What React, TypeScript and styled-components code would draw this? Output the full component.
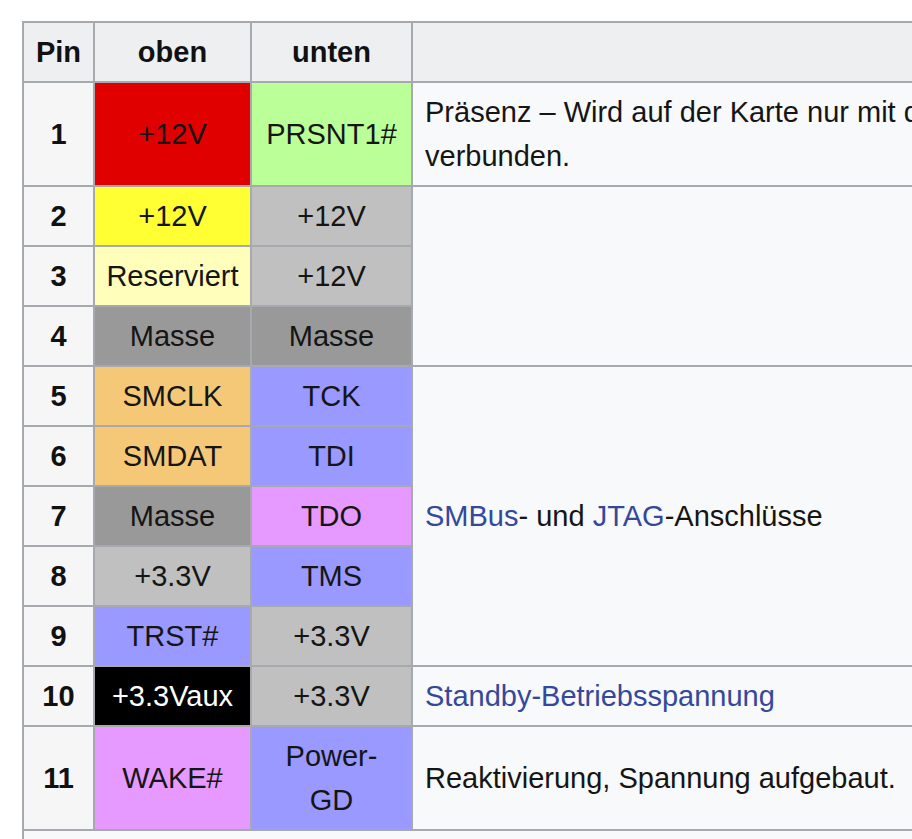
import React from "react";
import styled, { createGlobalStyle } from "styled-components";

const Global = createGlobalStyle`
  html, body {
    margin: 0;
    padding: 0;
    background: #ffffff;
    overflow: hidden;
  }
  body {
    font-family: "Liberation Sans", Arial, Helvetica, sans-serif;
    color: #202122;
  }
`;

const Page = styled.div`
  padding: 21px 0 0 22px;
  width: 1200px;
`;

const Table = styled.table`
  border-collapse: collapse;
  table-layout: fixed;
  width: 999px;
  font-size: 29px;
  line-height: 44px;
  background: #f8f9fa;
  border: 2px solid #a6a9ad;
`;

const Col = styled.col<{ $w: number }>`
  width: ${(p) => p.$w}px;
`;

const HeaderCell = styled.th`
  background: #eeeff1;
  border: 2px solid #a6a9ad;
  padding: 7px 10px;
  font-weight: bold;
  text-align: center;
  color: #111;
`;

const PinCell = styled.th`
  background: #f6f6f7;
  border: 2px solid #a6a9ad;
  padding: 7px 6px;
  font-weight: bold;
  text-align: center;
  color: #111;
`;

const SignalCell = styled.td<{ $bg: string; $fg?: string }>`
  background: ${(p) => p.$bg};
  color: ${(p) => p.$fg ?? "#151515"};
  border: 2px solid #a6a9ad;
  padding: 7px 6px;
  text-align: center;
  white-space: nowrap;
`;

const DescCell = styled.td`
  background: #f8f9fa;
  border: 2px solid #a6a9ad;
  padding: 7px 12px;
  text-align: left;
  vertical-align: middle;
  color: #151515;
  white-space: nowrap;
`;

const FooterCell = styled.td`
  background: #f8f9fa;
  border: 2px solid #a6a9ad;
  padding: 7px 12px;
  height: 44px;
`;

const WikiLink = styled.a`
  color: #34489c;
  text-decoration: none;
`;

type Row = {
  pin: number;
  top: string;
  topBg: string;
  topFg?: string;
  bottom: React.ReactNode;
  bottomBg: string;
  desc?: { span: number; content: React.ReactNode };
};

const RED = "#e00000";
const GREEN = "#bbff99";
const YELLOW = "#ffff33";
const LYELLOW = "#ffffbb";
const SILVER = "#c0c0c0";
const GRAY = "#999999";
const ORANGE = "#f5c878";
const BLUE = "#9999ff";
const PINK = "#e699ff";

const rows: Row[] = [
  {
    pin: 1,
    top: "+12V",
    topBg: RED,
    bottom: "PRSNT1#",
    bottomBg: GREEN,
    desc: {
      span: 1,
      content: (
        <>
          Präsenz – Wird auf der Karte nur mit dem jeweils letzten PRSNT2#
          <br />
          verbunden.
        </>
      ),
    },
  },
  { pin: 2, top: "+12V", topBg: YELLOW, bottom: "+12V", bottomBg: SILVER, desc: { span: 3, content: "" } },
  { pin: 3, top: "Reserviert", topBg: LYELLOW, bottom: "+12V", bottomBg: SILVER },
  { pin: 4, top: "Masse", topBg: GRAY, bottom: "Masse", bottomBg: GRAY },
  {
    pin: 5,
    top: "SMCLK",
    topBg: ORANGE,
    bottom: "TCK",
    bottomBg: BLUE,
    desc: {
      span: 5,
      content: (
        <>
          <WikiLink href="#">SMBus</WikiLink>- und <WikiLink href="#">JTAG</WikiLink>-Anschlüsse
        </>
      ),
    },
  },
  { pin: 6, top: "SMDAT", topBg: ORANGE, bottom: "TDI", bottomBg: BLUE },
  { pin: 7, top: "Masse", topBg: GRAY, bottom: "TDO", bottomBg: PINK },
  { pin: 8, top: "+3.3V", topBg: SILVER, bottom: "TMS", bottomBg: BLUE },
  { pin: 9, top: "TRST#", topBg: BLUE, bottom: "+3.3V", bottomBg: SILVER },
  {
    pin: 10,
    top: "+3.3Vaux",
    topBg: "#000000",
    topFg: "#ffffff",
    bottom: "+3.3V",
    bottomBg: SILVER,
    desc: { span: 1, content: <WikiLink href="#">Standby-Betriebsspannung</WikiLink> },
  },
  {
    pin: 11,
    top: "WAKE#",
    topBg: PINK,
    bottom: (
      <>
        Power-
        <br />
        GD
      </>
    ),
    bottomBg: BLUE,
    desc: { span: 1, content: "Reaktivierung, Spannung aufgebaut." },
  },
];

export default function App() {
  return (
    <>
      <Global />
      <Page>
        <Table>
          <colgroup>
            <Col $w={71} />
            <Col $w={157} />
            <Col $w={161} />
            <Col $w={610} />
          </colgroup>
          <thead>
            <tr>
              <HeaderCell>Pin</HeaderCell>
              <HeaderCell>oben</HeaderCell>
              <HeaderCell>unten</HeaderCell>
              <HeaderCell />
            </tr>
          </thead>
          <tbody>
            {rows.map((r) => (
              <tr key={r.pin}>
                <PinCell>{r.pin}</PinCell>
                <SignalCell $bg={r.topBg} $fg={r.topFg}>
                  {r.top}
                </SignalCell>
                <SignalCell $bg={r.bottomBg}>{r.bottom}</SignalCell>
                {r.desc && <DescCell rowSpan={r.desc.span}>{r.desc.content}</DescCell>}
              </tr>
            ))}
            <tr>
              <FooterCell colSpan={4} />
            </tr>
          </tbody>
        </Table>
      </Page>
    </>
  );
}
